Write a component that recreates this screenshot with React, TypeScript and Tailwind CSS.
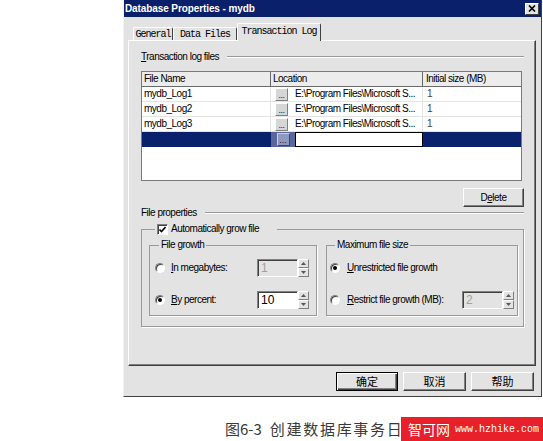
import React from "react";

const sans = "font-['Liberation_Sans',Arial,sans-serif] text-[10px] leading-[12px] tracking-[-0.5px] text-black";
const cjk = "font-['Noto_Sans_CJK_SC',sans-serif]";

function SectionLabel({ children }: { children: React.ReactNode }) {
  return (
    <div className="flex h-[12px] items-center gap-[8px]">
      <span className={sans}>{children}</span>
      <div className="h-[2px] flex-1 border-t border-b border-t-[#9a9a9a] border-b-white" />
    </div>
  );
}

function Radio({ checked }: { checked?: boolean }) {
  return (
    <div className="flex h-[10px] w-[10px] items-center justify-center rounded-full border border-t-[#808080] border-l-[#808080] border-r-white border-b-white bg-white shadow-[inset_1px_1px_0_#404040]">
      {checked && <div className="h-[4px] w-[4px] rounded-full bg-black" />}
    </div>
  );
}

function Arrow({ up }: { up?: boolean }) {
  return (
    <svg width="5" height="3" viewBox="0 0 5 3">
      <path d={up ? "M0 3 L2.5 0 L5 3 Z" : "M0 0 L2.5 3 L5 0 Z"} fill="#555" />
    </svg>
  );
}

function Spin({ value, disabled }: { value: string; disabled?: boolean }) {
  return (
    <div className="flex h-[18px]">
      <div
        className={
          disabled
            ? "flex w-[41px] items-center border border-t-[#808080] border-l-[#808080] border-r-white border-b-white bg-[#e3e3e3] pl-[3px] font-['Liberation_Sans',Arial,sans-serif] text-[12px] text-[#a0a0a0] shadow-[inset_1px_1px_0_#404040]"
            : "flex w-[41px] items-center border border-t-[#808080] border-l-[#808080] border-r-white border-b-white bg-white pl-[3px] font-['Liberation_Sans',Arial,sans-serif] text-[12px] text-black shadow-[inset_1px_1px_0_#404040]"
        }
      >
        {value}
      </div>
      <div className="flex w-[11px] flex-col">
        <div className="flex h-[9px] items-center justify-center border border-t-white border-l-white border-r-[#808080] border-b-[#808080] bg-[#e3e3e3]">
          <Arrow up />
        </div>
        <div className="flex h-[9px] items-center justify-center border border-t-white border-l-white border-r-[#808080] border-b-[#808080] bg-[#e3e3e3]">
          <Arrow />
        </div>
      </div>
    </div>
  );
}

function DotsButton({ selected }: { selected?: boolean }) {
  return (
    <div
      className={
        selected
          ? "flex h-[13px] w-[13px] items-end justify-center border border-t-[#c8cde0] border-l-[#c8cde0] border-r-[#3a4577] border-b-[#3a4577] bg-[#8e98c0] pb-[1px] font-['Liberation_Sans',Arial,sans-serif] text-[9px] leading-[8px] text-[#111]"
          : "flex h-[13px] w-[13px] items-end justify-center border border-t-white border-l-white border-r-[#808080] border-b-[#808080] bg-[#d6d6d6] pb-[1px] font-['Liberation_Sans',Arial,sans-serif] text-[9px] leading-[8px] text-[#111]"
      }
    >
      ...
    </div>
  );
}

const logs = ["mydb_Log1", "mydb_Log2", "mydb_Log3"];

function Grid() {
  return (
    <div className="flex h-[110px] w-[381px] flex-col border border-[#7a7a7a] bg-white">
      <div className={`flex h-[15px] border-b border-[#6a6a6a] bg-[#ececec] ${sans}`}>
        <div className="flex w-[129px] items-center border-r border-[#6a6a6a] pl-[2px]">File Name</div>
        <div className="flex w-[152px] items-center border-r border-[#6a6a6a] pl-[2px]">Location</div>
        <div className="flex flex-1 items-center pl-[3px]">Initial size (MB)</div>
      </div>
      {logs.map((name) => (
        <div key={name} className={`flex h-[15px] border-b border-[#e4e4e4] ${sans}`}>
          <div className="flex w-[129px] items-center border-r border-[#e4e4e4] pl-[2px]">{name}</div>
          <div className="flex w-[152px] items-center border-r border-[#e4e4e4] pl-[4px]">
            <DotsButton />
            <span className="ml-[7px] whitespace-nowrap">{"E:\\Program Files\\Microsoft S..."}</span>
          </div>
          <div className="flex flex-1 items-center pl-[4px] text-[#444]">1</div>
        </div>
      ))}
      <div className="flex h-[15px]">
        <div className="w-[129px] bg-[#0a226b]" />
        <div className="flex w-[152px]">
          <div className="flex w-[24px] items-center justify-center bg-[#5a679c]">
            <DotsButton selected />
          </div>
          <div className="flex-1 border border-black bg-white" />
        </div>
        <div className="flex-1 bg-[#0a226b]" />
      </div>
    </div>
  );
}

function Tab({ label, active, width }: { label: string; active?: boolean; width: string }) {
  return (
    <div
      className={
        active
          ? `relative z-10 -mb-[1px] flex h-[18px] items-center justify-center rounded-t-[2px] border-t border-l border-r border-t-white border-l-white border-r-[#404040] bg-[#e3e3e3] pb-[2px] font-['Liberation_Mono',monospace] text-[10px] tracking-[-1px] text-black ${width}`
          : `flex h-[13px] items-center justify-center rounded-t-[2px] border-t border-l border-r border-t-white border-l-white border-r-[#404040] bg-[#e3e3e3] font-['Liberation_Mono',monospace] text-[10px] tracking-[-1px] text-black ${width}`
      }
    >
      {label}
    </div>
  );
}

function DlgButton({ children, isDefault }: { children: React.ReactNode; isDefault?: boolean }) {
  return (
    <div
      className={
        isDefault
          ? `flex h-[19px] w-[62px] items-center justify-center border border-black bg-[#e3e3e3] text-[11px] text-black shadow-[inset_1px_1px_0_white,inset_-1px_-1px_0_#404040,inset_-2px_-2px_0_#808080] ${cjk}`
          : `flex h-[19px] w-[63px] items-center justify-center border border-t-white border-l-white border-r-[#404040] border-b-[#404040] bg-[#e3e3e3] text-[11px] text-black shadow-[inset_-1px_-1px_0_#808080] ${cjk}`
      }
    >
      {children}
    </div>
  );
}

export default function App() {
  return (
    <div className="relative h-[441px] w-[543px] overflow-hidden bg-white">
      <div className="ml-[123px] flex h-[397px] w-[419px] flex-col border-l border-r border-b border-l-[#f2f2f2] border-r-[#404040] border-b-[#404040] bg-[#e3e3e3]">
        {/* title bar */}
        <div className="flex h-[17px] items-center justify-between bg-[#0b206b] pl-[1px] pr-[2px]">
          <span className="font-['Liberation_Sans',Arial,sans-serif] text-[10px] font-bold tracking-[-0.1px] text-white">
            Database Properties - mydb
          </span>
          <div className="flex h-[12px] w-[14px] items-center justify-center border border-t-white border-l-white border-r-[#404040] border-b-[#404040] bg-[#e3e3e3]">
            <svg width="8" height="7" viewBox="0 0 8 7">
              <path d="M1 0.5 L7 6.5 M7 0.5 L1 6.5" stroke="black" strokeWidth="1.6" />
            </svg>
          </div>
        </div>

        <div className="flex flex-col pl-[4px] pr-[5px]">
          {/* tabs */}
          <div className="flex h-[23px] items-end pl-[5px]">
            <Tab label="General" width="w-[40px]" />
            <Tab label="Data Files" width="w-[64px]" />
            <Tab label="Transaction Log" width="w-[84px]" active />
          </div>

          {/* panel */}
          <div className="flex h-[326px] flex-col border border-t-white border-l-white border-r-[#404040] border-b-[#404040] pt-[9px] pl-[12px] pr-[11px] shadow-[inset_-1px_-1px_0_#808080]">
            <div className="flex h-[14px] flex-col justify-center">
              <SectionLabel>
                <span className="underline">T</span>ransaction log files
              </SectionLabel>
            </div>
            <div className="mt-[7px]">
              <Grid />
            </div>
            <div className="mt-[7px] flex justify-end">
              <div className={`flex h-[19px] w-[61px] items-center justify-center border border-t-white border-l-white border-r-[#404040] border-b-[#404040] shadow-[inset_-1px_-1px_0_#808080] ${sans}`}>
                D<span className="underline">e</span>lete
              </div>
            </div>
            <SectionLabel>File properties</SectionLabel>

            <fieldset className="mt-[3px] border border-[#9a9a9a] pb-[10px] pl-[7px] pr-[5px] pt-[3px] shadow-[1px_1px_0_white]">
              <legend className="ml-[6px] flex h-[14px] items-center pl-[2px] pr-[18px]">
                <div className="flex h-[11px] w-[11px] items-center justify-center border border-t-[#808080] border-l-[#808080] border-r-white border-b-white bg-white shadow-[inset_1px_1px_0_#404040]">
                  <svg width="7" height="7" viewBox="0 0 7 7">
                    <path d="M0.5 3.5 L2.5 5.5 L6.5 1" stroke="black" strokeWidth="1.6" fill="none" />
                  </svg>
                </div>
                <span className={`ml-[3px] ${sans}`}>Automatically grow file</span>
              </legend>

              <div className="flex gap-[9px]">
                <fieldset className="w-[168px] border border-[#9a9a9a] pb-[6px] pl-[5px] pr-[7px] shadow-[1px_1px_0_white]">
                  <legend className={`ml-[4px] h-[12px] px-[2px] ${sans}`}>File growth</legend>
                  <div className="mt-[8px] flex h-[18px] items-center justify-between">
                    <div className="flex items-center gap-[6px]">
                      <Radio />
                      <span className={sans}>
                        <span className="underline">I</span>n megabytes:
                      </span>
                    </div>
                    <Spin value="1" disabled />
                  </div>
                  <div className="mt-[14px] flex h-[18px] items-center justify-between">
                    <div className="flex items-center gap-[6px]">
                      <Radio checked />
                      <span className={sans}>
                        <span className="underline">B</span>y percent:
                      </span>
                    </div>
                    <Spin value="10" />
                  </div>
                </fieldset>

                <fieldset className="flex-1 border border-[#9a9a9a] pb-[6px] pl-[3px] pr-[3px] shadow-[1px_1px_0_white]">
                  <legend className={`ml-[5px] h-[12px] px-[2px] ${sans}`}>Maximum file size</legend>
                  <div className="mt-[8px] flex h-[18px] items-center gap-[7px]">
                    <Radio checked />
                    <span className={sans}>
                      <span className="underline">U</span>nrestricted file growth
                    </span>
                  </div>
                  <div className="mt-[14px] flex h-[18px] items-center justify-between">
                    <div className="flex items-center gap-[7px]">
                      <Radio />
                      <span className={sans}>
                        <span className="underline">R</span>estrict file growth (MB):
                      </span>
                    </div>
                    <Spin value="2" disabled />
                  </div>
                </fieldset>
              </div>
            </fieldset>
          </div>

          {/* dialog buttons */}
          <div className="mt-[6px] flex justify-end gap-[5px] pr-[2px]">
            <DlgButton isDefault>确定</DlgButton>
            <DlgButton>取消</DlgButton>
            <DlgButton>帮助</DlgButton>
          </div>
        </div>
      </div>

      {/* caption */}
      <div className={`mt-[23px] flex whitespace-nowrap pl-[225px] text-[15px] leading-[18px] text-[#3a3a3a] ${cjk}`}>
        <span>图6-3</span>
        <span className="ml-[8px] tracking-[1.7px]">创建数据库事务日志</span>
      </div>

      {/* watermark */}
      <div className="absolute bottom-0 right-0 flex h-[24px] w-[142px] items-center whitespace-nowrap bg-[#e8202a] pl-[7px]">
        <span className={`text-[14px] leading-[18px] text-white ${cjk}`}>智可网</span>
        <span className="ml-[5px] font-['Liberation_Mono',monospace] text-[10px] text-white">www.hzhike.com</span>
      </div>
    </div>
  );
}
